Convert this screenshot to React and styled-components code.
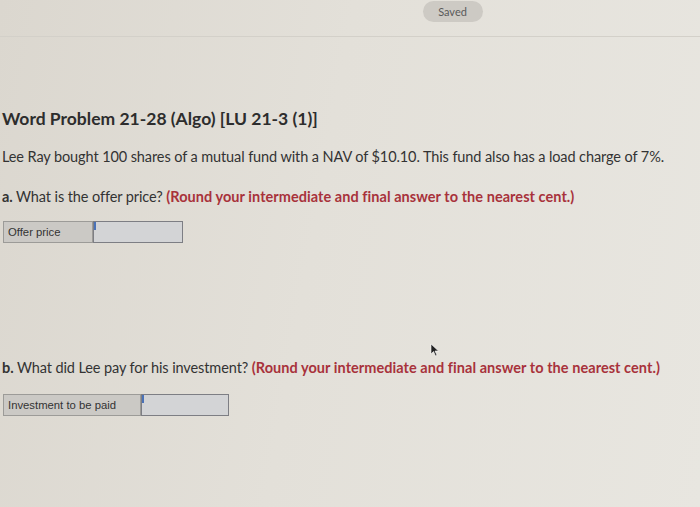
import React from "react";
import styled, { createGlobalStyle } from "styled-components";

const Global = createGlobalStyle`
  html, body { margin: 0; padding: 0; }
  body {
    width: 700px;
    height: 507px;
    overflow: hidden;
    background: linear-gradient(100deg, #dbd7cf 0%, #e3e0d9 45%, #e8e6e0 100%);
    font-family: Lato, "Open Sans", sans-serif;
    color: #2f2f2f;
  }
`;

const Page = styled.div`
  position: relative;
  width: 700px;
  height: 507px;
`;

const TopBar = styled.div`
  height: 37px;
  border-bottom: 1px solid #d3d0c9;
  display: flex;
  justify-content: center;
  padding-top: 1px;
  padding-left: 205px;
  box-sizing: border-box;
`;

const SavedPill = styled.div`
  width: 60px;
  height: 21px;
  border-radius: 11px;
  background: #cdcac4;
  color: #5a5a5a;
  font-size: 11px;
  display: flex;
  align-items: center;
  justify-content: center;
`;

const Content = styled.div`
  padding: 71px 0 0 2px;
`;

const Title = styled.h1`
  margin: 0 0 18px;
  font-size: 17.5px;
  font-weight: 700;
  color: #2d2d2d;
`;

const Para = styled.p`
  margin: 0 0 ${(p) => p.$mb ?? 20}px;
  margin-top: ${(p) => p.$mt ?? 0}px;
  font-size: 14.5px;
  line-height: 20px;
  letter-spacing: -0.1px;
  color: #333;
`;

const Part = styled.span`
  font-weight: 700;
`;

const Hint = styled.span`
  font-weight: 700;
  color: #a8323b;
  letter-spacing: 0.05px;
`;

const AnswerRow = styled.div`
  display: flex;
  margin: ${(p) => p.$mt || 0}px 0 0 1px;
  height: 22px;
`;

const Label = styled.div`
  width: ${(p) => p.$w}px;
  box-sizing: border-box;
  background: #cbc9c5;
  border: 1px solid #9c9b98;
  font-family: "Liberation Sans", Arial, sans-serif;
  font-size: 11.3px;
  color: #333;
  display: flex;
  align-items: center;
  padding-left: 4px;
`;

const Input = styled.div`
  position: relative;
  width: ${(p) => p.$w}px;
  box-sizing: border-box;
  background: #d3d4d6;
  border: 1px solid #7d7e84;
  &::before {
    content: "";
    position: absolute;
    left: 0;
    top: 0;
    width: 2px;
    height: 8px;
    background: #4a72b8;
  }
`;

const Cursor = styled.svg`
  position: absolute;
  left: 430px;
  top: 343px;
`;

export default function App() {
  return (
    <Page>
      <Global />
      <TopBar>
        <SavedPill>Saved</SavedPill>
      </TopBar>
      <Content>
        <Title>Word Problem 21-28 (Algo) [LU 21-3 (1)]</Title>
        <Para>
          Lee Ray bought 100 shares of a mutual fund with a NAV of $10.10. This fund also has a load charge of 7%.
        </Para>
        <Para $mb={14}>
          <Part>a.</Part> What is the offer price? <Hint>(Round your intermediate and final answer to the nearest cent.)</Hint>
        </Para>
        <AnswerRow>
          <Label $w={90}>Offer price</Label>
          <Input $w={90} />
        </AnswerRow>
        <Para $mt={115} $mb={16}>
          <Part>b.</Part> What did Lee pay for his investment? <Hint>(Round your intermediate and final answer to the nearest cent.)</Hint>
        </Para>
        <AnswerRow>
          <Label $w={138}>Investment to be paid</Label>
          <Input $w={88} />
        </AnswerRow>
      </Content>
      <Cursor width="10" height="14" viewBox="0 0 10 14">
        <path d="M1 1 L1 11 L3.5 8.5 L5.5 13 L7 12.3 L5 8 L8.5 8 Z" fill="#222" stroke="#fff" strokeWidth="0.6" />
      </Cursor>
    </Page>
  );
}
